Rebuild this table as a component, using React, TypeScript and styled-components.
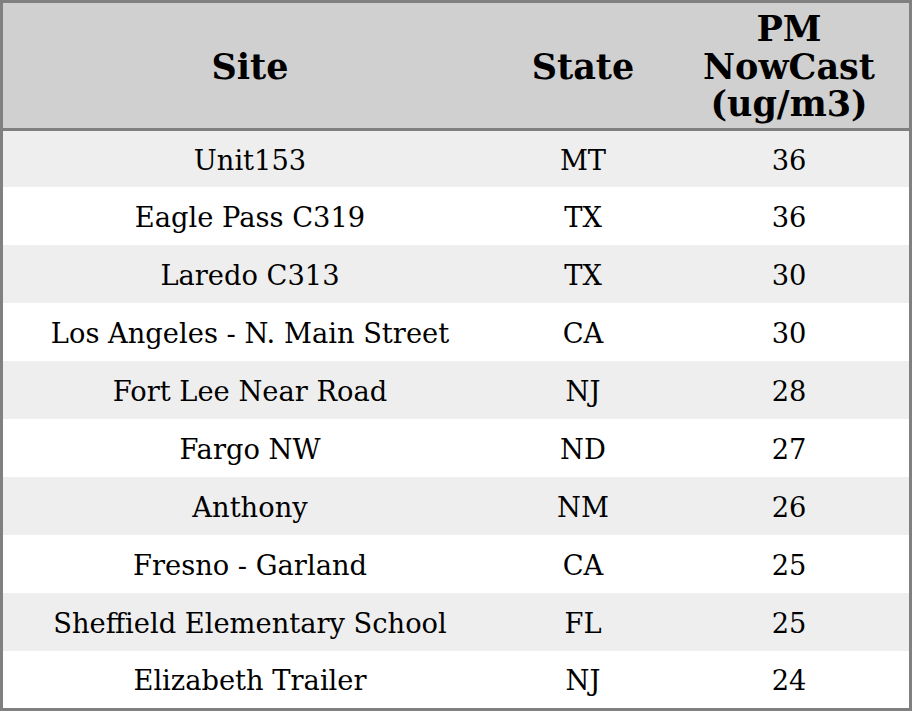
import React from 'react';
import styled, { createGlobalStyle } from 'styled-components';

const GlobalStyle = createGlobalStyle`
  html, body {
    margin: 0;
    padding: 0;
    background: #ffffff;
  }
`;

const Table = styled.table`
  width: 912px;
  border-collapse: collapse;
  border: 3px solid #808080;
  font-family: 'DejaVu Serif', serif;
  color: #000;
  table-layout: fixed;
`;

const HeadCell = styled.th<{ $width: number }>`
  width: ${(p) => p.$width}px;
  background: #d0d0d0;
  font-size: 35px;
  font-weight: bold;
  line-height: 37.5px;
  padding: 7px 0 5px;
  text-align: center;
  vertical-align: middle;
  border-bottom: 3px solid #808080;
`;

// td height is content-box here, so rows are height + 4px top padding
const Row = styled.tr<{ $striped: boolean }>`
  background: ${(p) => (p.$striped ? '#eeeeee' : '#ffffff')};

  & > td {
    height: 54px;
  }

  &:first-child > td {
    height: 52px;
  }

  &:last-child > td {
    height: 53px;
  }
`;

const Cell = styled.td`
  padding: 4px 0 0;
  font-size: 27.3px;
  line-height: 30px;
  text-align: center;
  vertical-align: middle;
`;

const rows = [
  ['Unit153', 'MT', 36],
  ['Eagle Pass C319', 'TX', 36],
  ['Laredo C313', 'TX', 30],
  ['Los Angeles - N. Main Street', 'CA', 30],
  ['Fort Lee Near Road', 'NJ', 28],
  ['Fargo NW', 'ND', 27],
  ['Anthony', 'NM', 26],
  ['Fresno - Garland', 'CA', 25],
  ['Sheffield Elementary School', 'FL', 25],
  ['Elizabeth Trailer', 'NJ', 24],
];

const App = () => {
  return (
    <>
      <GlobalStyle />
      <Table>
        <thead>
          <tr>
            <HeadCell $width={494}>Site</HeadCell>
            <HeadCell $width={172}>State</HeadCell>
            <HeadCell $width={240}>
              PM
              <br />
              NowCast
              <br />
              (ug/m3)
            </HeadCell>
          </tr>
        </thead>
        <tbody>
          {rows.map(([site, state, value], i) => (
            <Row key={i} $striped={i % 2 === 0}>
              <Cell>{site}</Cell>
              <Cell>{state}</Cell>
              <Cell>{value}</Cell>
            </Row>
          ))}
        </tbody>
      </Table>
    </>
  );
};

export default App;
